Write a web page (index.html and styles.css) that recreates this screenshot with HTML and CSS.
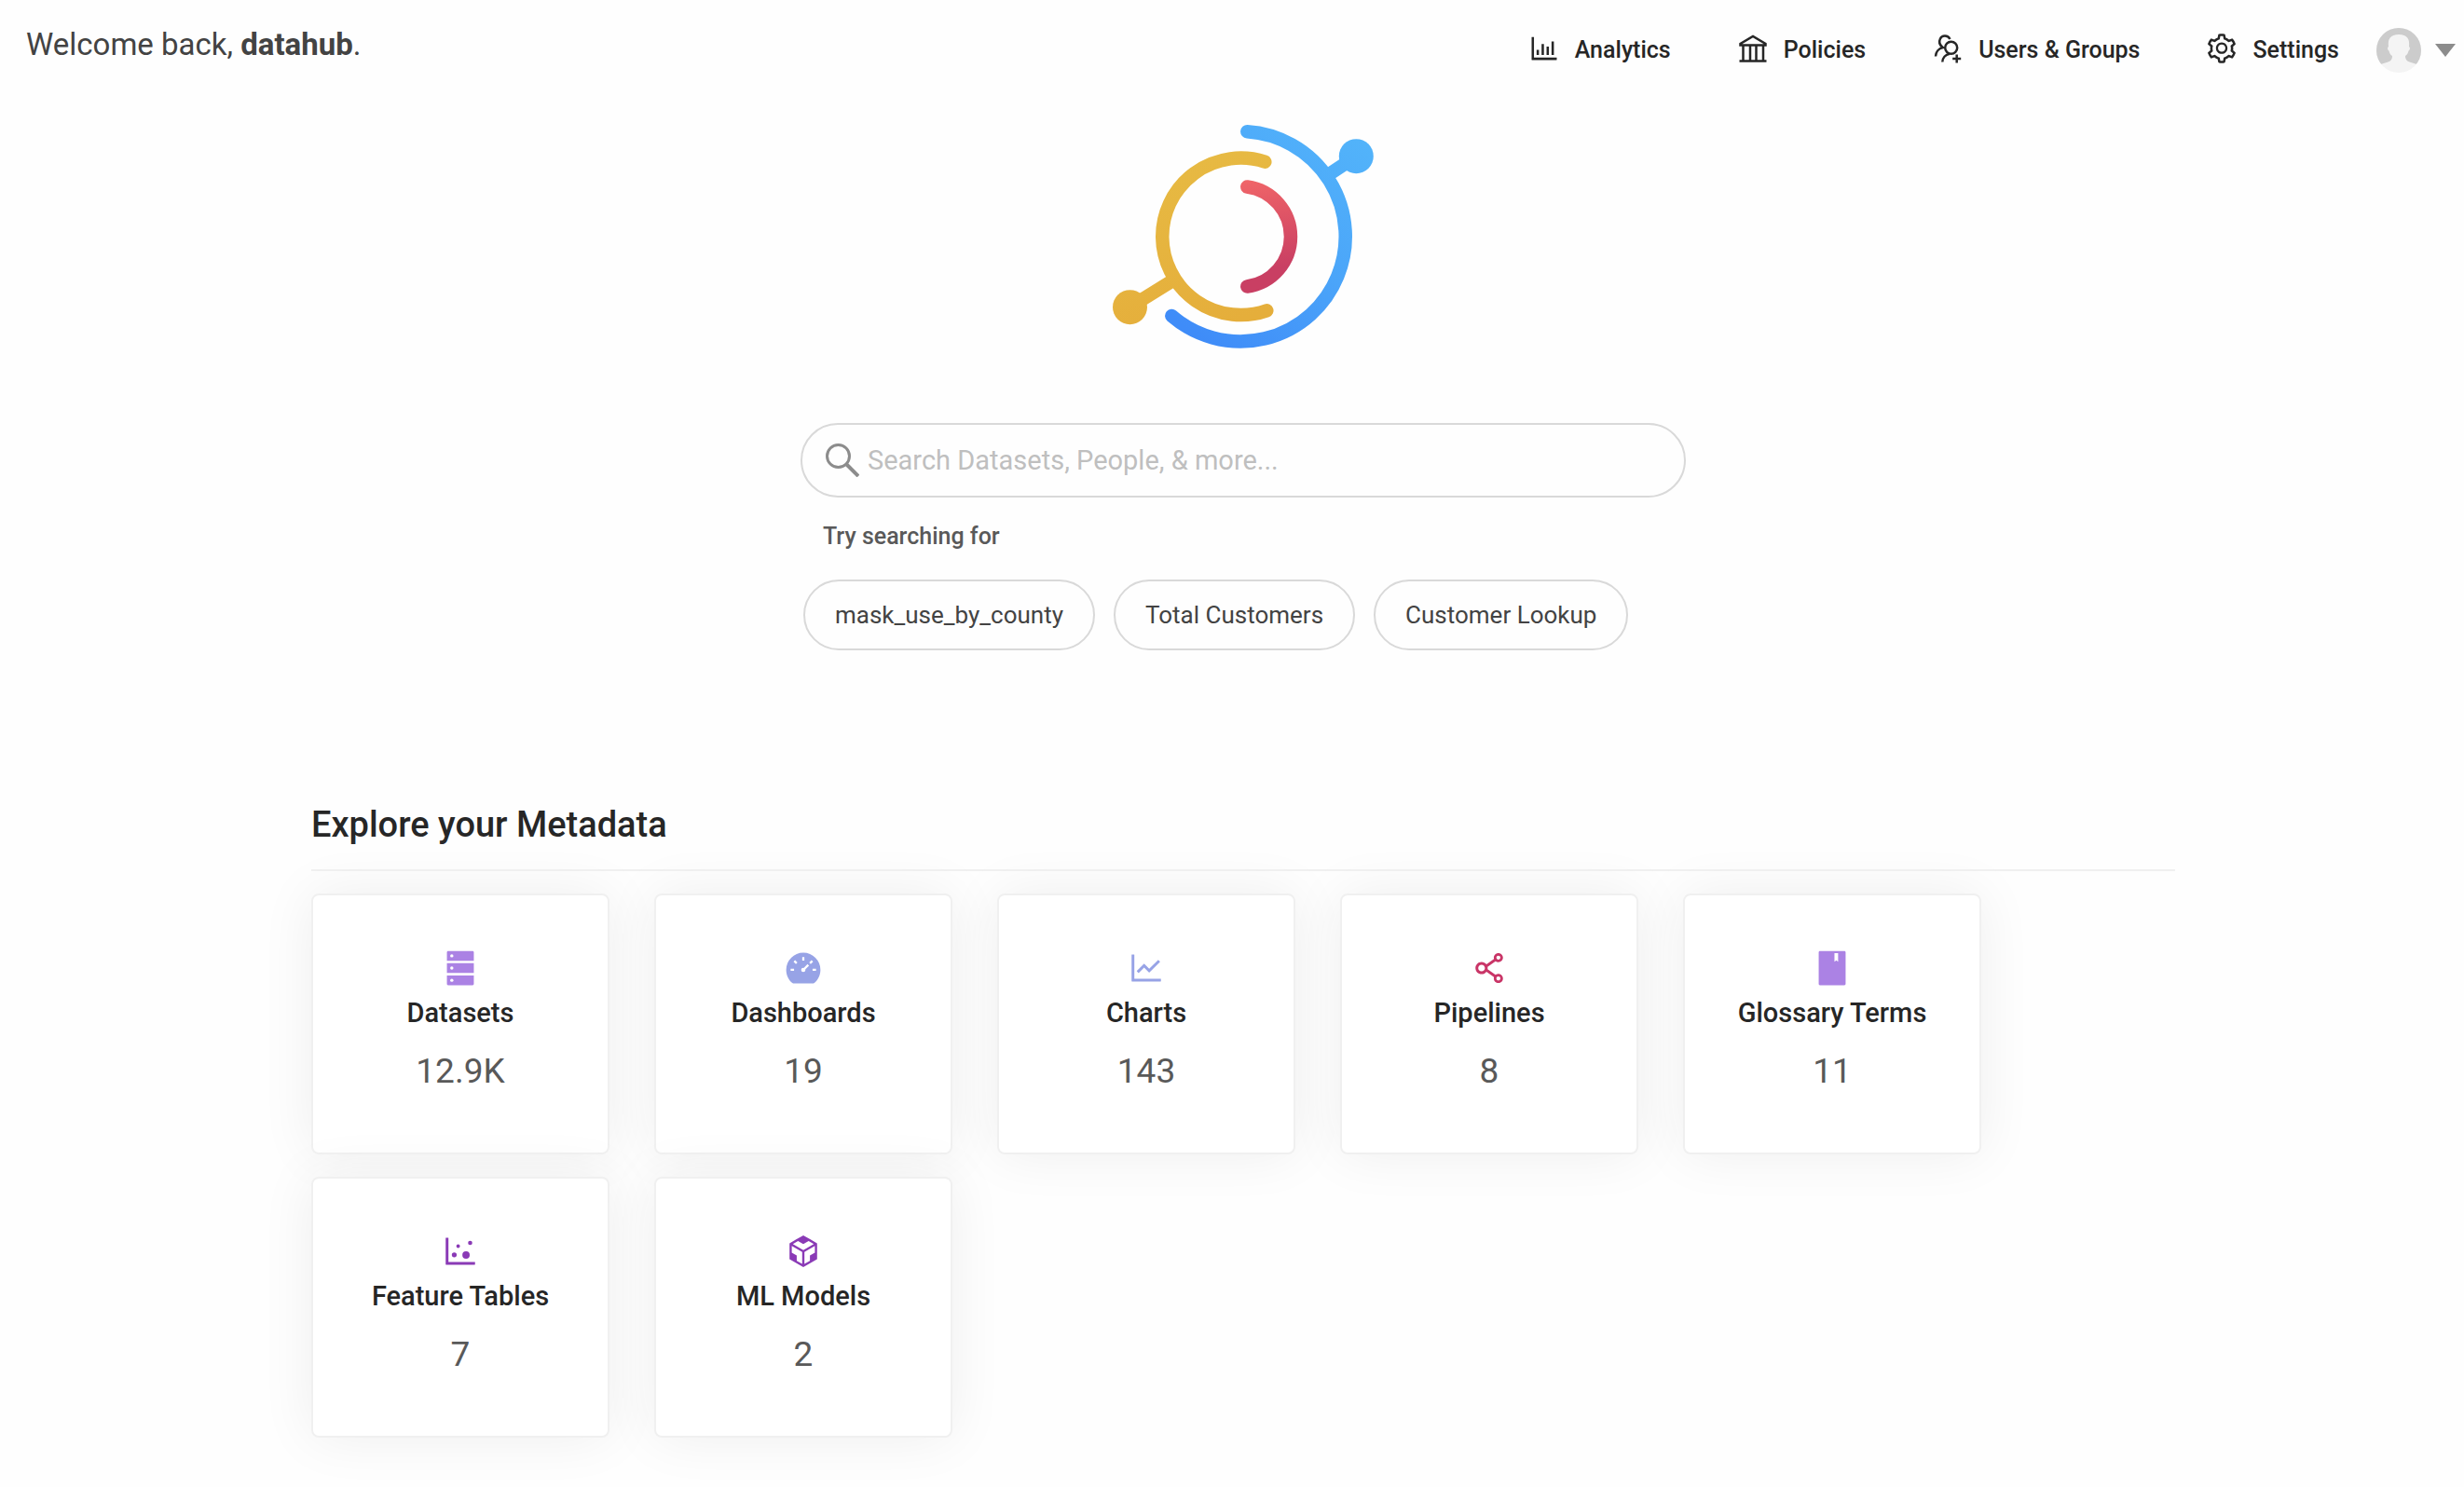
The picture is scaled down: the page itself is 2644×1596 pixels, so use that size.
FILE: index.html
```html
<!DOCTYPE html>
<html lang="en">
<head>
<meta charset="utf-8">
<meta name="viewport" content="width=device-width, initial-scale=1">
<title>DataHub</title>
<link rel="stylesheet" href="styles.css">
</head>
<body>
<header class="header">
  <p class="welcome">Welcome back, <strong>datahub</strong>.</p>
  <div class="header-right">
    <nav class="nav">
      <a class="nav-link" href="#analytics">
        <svg class="nav-icon" viewBox="0 0 1024 1024" aria-hidden="true"><path d="M888 792H200V168c0-4.400-3.600-8-8-8h-56c-4.400 0-8 3.600-8 8v688c0 4.400 3.600 8 8 8h752c4.400 0 8-3.600 8-8v-56c0-4.400-3.600-8-8-8zM280 552h72v160h-72zM432 376h72v336h-72zM584 454h72v258h-72zM736 296h72v416h-72z"/></svg>
        Analytics</a>
      <a class="nav-link" href="#policies">
        <svg class="nav-icon line" viewBox="0 0 36 36" aria-hidden="true"><path d="M4.500 14.500V13L18 5l13.500 8v1.500zM7.500 15v16M15 15v16M21.500 15v16M29 15v16M3.500 31.500h29"/></svg>
        Policies</a>
      <a class="nav-link" href="#users">
        <svg class="nav-icon line" viewBox="0 0 36 36" aria-hidden="true"><circle cx="21.700" cy="17.200" r="6.500"/><path d="M12.300 32.500C12.500 28 15.500 24.500 20 23.700M27.700 24.500v9M23.200 29h9M20.500 8C18 3.500 12 3.500 10 7.500c-1.800 3.500-.5 7 2.800 9.500C8 18 5.200 22 5 26.500"/></svg>
        Users &amp; Groups</a>
      <a class="nav-link" href="#settings">
        <svg class="nav-icon" viewBox="0 0 1024 1024" aria-hidden="true"><path d="M924.8 625.7l-65.500-56c3.100-19 4.700-38.400 4.700-57.800s-1.600-38.800-4.700-57.800l65.500-56a32.030 32.030 0 009.300-35.200l-.9-2.600a443.740 443.740 0 00-79.700-137.900l-1.800-2.100a32.120 32.120 0 00-35.100-9.500l-81.300 28.900c-30-24.600-63.500-44-99.700-57.600l-15.700-85a32.050 32.050 0 00-25.800-25.700l-2.700-.5c-52.100-9.400-106.900-9.400-159 0l-2.700.5a32.050 32.050 0 00-25.800 25.700l-15.800 85.400a351.860 351.860 0 00-99 57.400l-81.900-29.100a32 32 0 00-35.100 9.500l-1.800 2.100a446.020 446.020 0 00-79.700 137.900l-.9 2.600c-4.500 12.500-.8 26.500 9.300 35.200l66.300 56.600c-3.100 18.800-4.600 38-4.600 57.100 0 19.200 1.500 38.400 4.600 57.100L99 625.500a32.030 32.030 0 00-9.300 35.200l.9 2.600c18.100 50.400 44.900 96.900 79.700 137.900l1.800 2.100a32.120 32.120 0 0035.100 9.500l81.900-29.100c29.800 24.500 63.100 43.900 99 57.400l15.800 85.400a32.050 32.050 0 0025.800 25.700l2.700.5a449.400 449.400 0 00159 0l2.700-.5a32.050 32.050 0 0025.800-25.700l15.700-85a350 350 0 0099.700-57.600l81.300 28.900a32 32 0 0035.100-9.500l1.800-2.100c34.800-41.100 61.600-87.500 79.700-137.900l.9-2.600c4.500-12.300.8-26.300-9.300-35zM788.300 465.900c2.500 15.100 3.800 30.600 3.800 46.100s-1.300 31-3.800 46.100l-6.600 40.100 74.700 63.900a370.030 370.030 0 01-42.600 73.600L721 702.800l-31.400 25.800c-23.900 19.600-50.500 35-79.300 45.800l-38.100 14.300-17.900 97a377.500 377.500 0 01-85 0l-17.900-97.200-37.800-14.500c-28.500-10.800-55-26.200-78.700-45.700l-31.400-25.900-93.400 33.200c-17-22.900-31.200-47.600-42.600-73.600l75.500-64.500-6.500-40c-2.400-14.900-3.700-30.300-3.700-45.500 0-15.300 1.200-30.600 3.700-45.500l6.500-40-75.500-64.500c11.300-26.100 25.600-50.700 42.600-73.600l93.400 33.200 31.400-25.900c23.700-19.500 50.200-34.900 78.700-45.700l37.900-14.300 17.900-97.200c28.100-3.200 56.800-3.200 85 0l17.900 97 38.100 14.300c28.700 10.800 55.400 26.200 79.300 45.800l31.400 25.800 92.800-32.900c17 22.900 31.200 47.600 42.600 73.600L781.800 426l6.500 39.900zM512 326c-97.200 0-176 78.800-176 176s78.800 176 176 176 176-78.800 176-176-78.800-176-176-176zm79.200 255.200A111.600 111.600 0 01512 614c-29.900 0-58-11.700-79.200-32.800A111.600 111.600 0 01400 502c0-29.900 11.700-58 32.800-79.200C454 401.600 482.100 390 512 390c29.900 0 58 11.600 79.200 32.800A111.600 111.600 0 01624 502c0 29.900-11.700 58-32.800 79.200z"/></svg>
        Settings</a>
    </nav>
    <button class="account" type="button" aria-label="Account menu">
      <svg class="avatar" viewBox="0 0 48 48" aria-hidden="true"><path fill="#f4f4f4" d="M0 0h48v48H0z"/><path fill="#ccc" d="M0 0h48v41c-3-2-8-3-11-4-4-1-6-3-6-7 2-1 3-3 3.500-5.500C36 24 36.500 21 35 20c1-8-2-13-11-13s-12 5-11 13c-1.500 1-1 4 .5 4.500C14 27 15 29 17 30c0 4-2 6-6 7-3 1-8 2-11 4z"/></svg>
      <svg class="caret" viewBox="0 0 22 14" aria-hidden="true"><path fill="#8c8c8c" d="M0 0h22L11 14z"/></svg>
    </button>
  </div>
</header>

<main class="main">
  <svg class="logo" viewBox="0 0 280 240" role="img" aria-label="DataHub">
    <defs>
      <linearGradient id="blue" gradientUnits="userSpaceOnUse" x1="270" y1="20" x2="110" y2="240"><stop offset="0" stop-color="#52b3fa"/><stop offset=".5" stop-color="#4ba5f9"/><stop offset="1" stop-color="#3f8cf8"/></linearGradient>
      <linearGradient id="gold" gradientUnits="userSpaceOnUse" x1="80" y1="30" x2="130" y2="210"><stop offset="0" stop-color="#e7ba43"/><stop offset="1" stop-color="#e5ae3b"/></linearGradient>
      <linearGradient id="red" gradientUnits="userSpaceOnUse" x1="150" y1="60" x2="165" y2="155"><stop offset="0" stop-color="#ef6468"/><stop offset="1" stop-color="#c93f63"/></linearGradient>
    </defs>
    <g fill="none" stroke-width="14.500" stroke-linecap="round">
      <path stroke="url(#blue)" d="M144.300 7.300A112.700 112.700 0 1 1 63.300 205M235.300 51L261 34"/>
      <path stroke="url(#gold)" d="M163.300 39.700A84.200 84.200 0 1 0 165.300 199.300M62 168.700L18.500 195.700"/>
      <path stroke="url(#red)" d="M144.300 66.500A54 54 0 0 1 144.300 173.500"/>
    </g>
    <circle cx="261.300" cy="33.700" r="18.500" fill="url(#blue)"/>
    <circle cx="18.500" cy="195.700" r="18.500" fill="url(#gold)"/>
  </svg>

  <section class="search">
    <form class="search-box" role="search">
      <label class="search-label" for="q" aria-label="Search">
        <svg class="search-icon" viewBox="0 0 36 36" aria-hidden="true"><g fill="none" stroke="#8c8c8c"><circle cx="13.500" cy="13.500" r="12" stroke-width="3"/><path d="M22 22l13 13" stroke-width="4"/></g></svg>
      </label>
      <input class="search-input" id="q" type="text" placeholder="Search Datasets, People, &amp; more...">
    </form>
    <h2 class="hint">Try searching for</h2>
    <div class="pills">
      <button class="pill" type="button">mask_use_by_county</button>
      <button class="pill" type="button">Total Customers</button>
      <button class="pill" type="button">Customer Lookup</button>
    </div>
  </section>

  <section class="explore">
    <h1 class="explore-title">Explore your Metadata</h1>
    <div class="cards">
      <a class="card" href="#datasets">
        <svg class="card-icon" viewBox="0 0 1024 1024" fill="#ab82e4" aria-hidden="true"><path d="M832 64H192c-17.700 0-32 14.300-32 32v224h704V96c0-17.700-14.300-32-32-32zM160 384h704v256H160zM160 704v224c0 17.700 14.300 32 32 32h640c17.700 0 32-14.300 32-32V704z"/><g fill="#fff"><circle cx="288" cy="192" r="42"/><circle cx="288" cy="512" r="42"/><circle cx="288" cy="832" r="42"/></g></svg>
        <span class="card-name">Datasets</span><span class="card-count">12.9K</span>
      </a>
      <a class="card" href="#dashboards">
        <svg class="card-icon" viewBox="0 0 1024 1024" fill="#97a3e6" aria-hidden="true"><path d="M924.8 385.600a446.700 446.700 0 00-96-142.400 446.700 446.700 0 00-142.400-96C631.100 123.800 572.500 112 512 112s-119.100 11.800-174.400 35.200a446.700 446.700 0 00-142.400 96 446.700 446.700 0 00-96 142.400C75.800 440.900 64 499.500 64 560c0 132.700 58.300 257.700 159.900 343.100l1.700 1.400c5.800 4.800 13.100 7.500 20.600 7.500h531.700c7.500 0 14.800-2.700 20.600-7.500l1.700-1.400C901.700 817.700 960 692.700 960 560c0-60.500-11.900-119.100-35.200-174.400z"/><path stroke="#fff" stroke-width="56" d="M512 225v90M180 560h90M754 560h90M276 325l62 62M748 325l-62 62M512 560l130-130"/><circle cx="512" cy="560" r="56" fill="#fff"/></svg>
        <span class="card-name">Dashboards</span><span class="card-count">19</span>
      </a>
      <a class="card" href="#charts">
        <svg class="card-icon" viewBox="0 0 1024 1024" fill="#97a3e6" aria-hidden="true"><path d="M888 792H200V168c0-4.400-3.600-8-8-8h-56c-4.400 0-8 3.600-8 8v688c0 4.400 3.600 8 8 8h752c4.400 0 8-3.600 8-8v-56c0-4.400-3.600-8-8-8zM305.800 637.700c3.100 3.100 8.100 3.100 11.300 0l138.300-137.600L583 628.500c3.100 3.100 8.200 3.100 11.300 0l275.400-275.300c3.100-3.100 3.100-8.200 0-11.300l-39.600-39.600a8.030 8.030 0 00-11.300 0l-230 229.900L461.400 404a8.030 8.030 0 00-11.300 0L266.300 586.700a8.030 8.030 0 000 11.300l39.500 39.700z"/></svg>
        <span class="card-name">Charts</span><span class="card-count">143</span>
      </a>
      <a class="card" href="#pipelines">
        <svg class="card-icon" viewBox="0 0 1024 1024" fill="#c93567" aria-hidden="true"><path d="M752 664c-28.500 0-54.800 10-75.400 26.700L469.400 540.800a160.680 160.680 0 000-57.600l207.200-149.900C697.200 350 723.500 360 752 360c66.200 0 120-53.800 120-120s-53.800-120-120-120-120 53.800-120 120c0 11.600 1.600 22.700 4.700 33.300L439.900 415.800C410.700 377.100 364.300 352 312 352c-88.400 0-160 71.600-160 160s71.600 160 160 160c52.300 0 98.700-25.100 127.900-63.800l196.800 142.500c-3.100 10.600-4.700 21.800-4.700 33.300 0 66.200 53.800 120 120 120s120-53.800 120-120-53.800-120-120-120zm0-476c28.700 0 52 23.300 52 52s-23.300 52-52 52-52-23.300-52-52 23.300-52 52-52zM312 600c-48.500 0-88-39.500-88-88s39.500-88 88-88 88 39.500 88 88-39.500 88-88 88zm440 236c-28.700 0-52-23.300-52-52s23.300-52 52-52 52 23.300 52 52-23.300 52-52 52z"/></svg>
        <span class="card-name">Pipelines</span><span class="card-count">8</span>
      </a>
      <a class="card" href="#glossary">
        <svg class="card-icon" viewBox="0 0 1024 1024" fill="#ab82e4" aria-hidden="true"><path d="M832 64H192c-17.700 0-32 14.300-32 32v832c0 17.700 14.300 32 32 32h640c17.700 0 32-14.300 32-32V96c0-17.700-14.300-32-32-32zM668 345.900L621.500 312 572 347.400V124h96v221.900z"/></svg>
        <span class="card-name">Glossary Terms</span><span class="card-count">11</span>
      </a>
      <a class="card" href="#features">
        <svg class="card-icon" viewBox="0 0 1024 1024" fill="#8a3ab6" aria-hidden="true"><path d="M888 792H200V168c0-4.400-3.600-8-8-8h-56c-4.400 0-8 3.600-8 8v688c0 4.400 3.600 8 8 8h752c4.400 0 8-3.600 8-8v-56c0-4.400-3.600-8-8-8zM288 604a64 64 0 10128 0 64 64 0 10-128 0zm118-224a48 48 0 1096 0 48 48 0 10-96 0zm158 228a96 96 0 10192 0 96 96 0 10-192 0zm148-314a56 56 0 10112 0 56 56 0 10-112 0z"/></svg>
        <span class="card-name">Feature Tables</span><span class="card-count">7</span>
      </a>
      <a class="card" href="#models">
        <svg class="card-icon" viewBox="0 0 1024 1024" fill="#8a3ab6" aria-hidden="true"><path d="M709.600 210l.4-.2h.2L512 96 313.900 209.800h-.2l.7.3L151.500 304v416L512 928l360.500-208V304l-162.900-94zM482.700 843.600L339.600 761V621.400L210 547.800V372.900l272.700 157.300v313.400zM238.200 321.500l134.700-77.800 138.900 79.700 139.100-79.900 135.200 78-273.900 158-274-158zM814 548.300l-128.800 73.100v139.100l-143.900 83V530.400L814 373.100v175.200z"/></svg>
        <span class="card-name">ML Models</span><span class="card-count">2</span>
      </a>
    </div>
  </section>
</main>
</body>
</html>
```
FILE: styles.css
```css
* {
  box-sizing: border-box;
}

body {
  margin: 0;
  background: #fefefe;
  color: #262626;
  font-family: Roboto, "Liberation Sans", sans-serif;
}

a {
  color: inherit;
  text-decoration: none;
}

button {
  font: inherit;
  color: inherit;
  background: none;
  cursor: pointer;
}

/* Header */
.header {
  display: flex;
  justify-content: space-between;
  align-items: flex-start;
  padding: 28px 9px 0 28px;
}

.welcome {
  margin: 0;
  font-size: 33px;
  line-height: 40px;
  color: #434343;
}

.header-right {
  display: flex;
  align-items: center;
  gap: 40px;
  margin-top: 2px;
}

.nav {
  display: flex;
  gap: 70px;
}

.nav-link {
  display: flex;
  align-items: center;
  gap: 15px;
  font-size: 25px;
  font-weight: 500;
  line-height: 48px;
}

.nav-icon {
  width: 36px;
  height: 36px;
  margin-bottom: 4px;
  fill: currentColor;
}

.nav-icon.line {
  fill: none;
  stroke: currentColor;
  stroke-width: 2.5;
}

.account {
  display: flex;
  align-items: center;
  gap: 15px;
  padding: 0;
  border: 0;
}

.avatar {
  width: 48px;
  height: 48px;
  border-radius: 50%;
}

.caret {
  width: 22px;
  height: 14px;
}

/* Search */
.main {
  display: flex;
  flex-direction: column;
  align-items: center;
  padding: 56px 0 48px 24px;
}

.logo {
  width: 280px;
  height: 240px;
}

.search {
  width: 100%;
  max-width: 950px;
  margin: 80px 0 163px;
}

.search-box {
  display: flex;
  align-items: center;
  gap: 9px;
  height: 80px;
  padding: 0 25px;
  border: 2px solid #d9d9d9;
  border-radius: 40px;
}

.search-label {
  display: flex;
}

.search-icon {
  width: 36px;
  height: 36px;
}

.search-input {
  flex: 1;
  min-width: 0;
  padding: 0;
  border: 0;
  outline: 0;
  background: none;
  color: #434343;
  font: inherit;
  font-size: 29px;
  line-height: 40px;
}

.search-input::placeholder {
  color: #bfbfbf;
}

.hint {
  margin: 26px 0 30px 24px;
  color: #595959;
  font-size: 25px;
  font-weight: 500;
  line-height: 32px;
}

.pills {
  display: flex;
  flex-wrap: wrap;
  gap: 20px;
  padding-left: 3px;
}

.pill {
  height: 76px;
  padding: 0 32px;
  border: 2px solid #d9d9d9;
  border-radius: 38px;
  color: #434343;
  font-size: 26px;
}

/* Explore */
.explore {
  width: 100%;
  max-width: 2000px;
}

.explore-title {
  margin: 0 0 24px;
  padding-bottom: 24px;
  border-bottom: 2px solid #f0f0f0;
  font-size: 38px;
  font-weight: 500;
  line-height: 48px;
}

.cards {
  display: grid;
  grid-template-columns: repeat(auto-fill, 320px);
  gap: 24px 48px;
}

.card {
  display: flex;
  flex-direction: column;
  align-items: center;
  padding: 57px 0 59px;
  border: 2px solid #f0f0f0;
  border-radius: 8px;
  background: #fff;
  box-shadow: 0 0 60px #efefef;
}

.card-icon {
  width: 42px;
  height: 42px;
  margin-bottom: 5px;
}

.card-name {
  margin-bottom: 13px;
  font-size: 29px;
  font-weight: 500;
  line-height: 44px;
}

.card-count {
  color: #595959;
  font-size: 37px;
  line-height: 56px;
}
```
